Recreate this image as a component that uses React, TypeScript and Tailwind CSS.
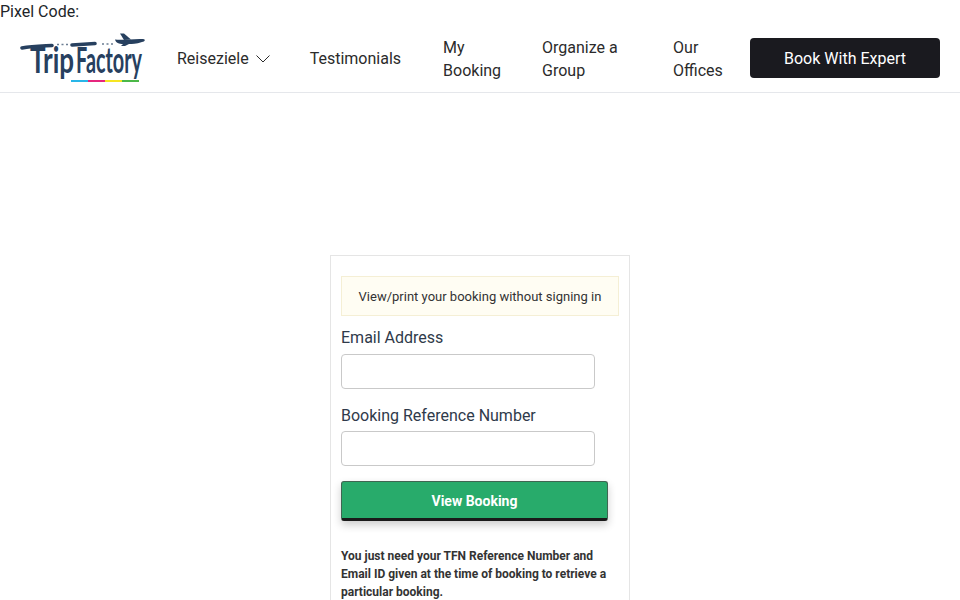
function Logo() {
  return (
    <svg width="126" height="52" viewBox="0 0 126 52" className="block shrink-0">
      {/* top strokes of the T and F */}
      <path d="M2 16 C 12 14 22 14 32 13.5" stroke="#27405f" strokeWidth="3.6" strokeLinecap="round" fill="none" />
      <path d="M52 13 L 75 11.5" stroke="#27405f" strokeWidth="3.6" strokeLinecap="round" fill="none" />
      <path d="M37 12.5h2M41.5 12.5h2M46 12.5h2M82 12h2M86.5 12h2M91 12h2" stroke="#6b7d92" strokeWidth="1.4" fill="none" />
      {/* plane */}
      <path d="M95 7.5 C 103 8.5 113 6.5 123 7 C 126 7.5 125 9.5 122 10 C 116 12 112 12 109 12 L 105 14 L 101 14 L 103 12 C 99 12 96 11 95 7.5 Z" fill="#27405f" />
      <path d="M104 8 L 100 1.5 L 104 1.5 L 111 7.5 Z" fill="#27405f" />
      <text
        transform="translate(10 41) scale(1 1.75)"
        textLength="44"
        lengthAdjust="spacingAndGlyphs"
        fontFamily="Lato, sans-serif"
        fontWeight="700"
        fontSize="21"
        fill="#27405f"
      >
        Trip
      </text>
      <text
        transform="translate(56 41) scale(1 1.75)"
        textLength="66"
        lengthAdjust="spacingAndGlyphs"
        fontFamily="Lato, sans-serif"
        fontWeight="700"
        fontSize="21"
        fill="#27405f"
      >
        Factory
      </text>
      {/* colour strip */}
      <rect x="51" y="48" width="17" height="2" fill="#29b6e8" />
      <rect x="68" y="48" width="17" height="2" fill="#e6267e" />
      <rect x="85" y="48" width="17" height="2" fill="#f6e522" />
      <rect x="102" y="48" width="17" height="2" fill="#4cb848" />
    </svg>
  );
}

function NavLink({ children, className = '' }: { children: React.ReactNode; className?: string }) {
  return <a className={`text-base leading-[23px] text-[#2b2b2b] ${className}`}>{children}</a>;
}

export default function App() {
  return (
    <div className="h-[600px] overflow-hidden bg-white font-['Roboto',sans-serif] text-[#212529]">
      <div className="h-[23px] text-base leading-[23px]">Pixel Code:</div>

      <header className="flex h-[70px] items-center border-b border-[#e5e7eb] pr-5 pl-5">
        <Logo />
        <nav className="mt-[2px] ml-[31px] flex flex-1 items-center">
          <NavLink className="flex items-center">
            Reiseziele
            <svg width="14" height="8" viewBox="0 0 14 8" className="ml-[7px]" fill="none" stroke="#2b2b2b" strokeWidth="1">
              <path d="M0.5 0.5 L7 7 L13.5 0.5" />
            </svg>
          </NavLink>
          <NavLink className="ml-[40px]">Testimonials</NavLink>
          <NavLink className="ml-[42px] w-[59px]">My Booking</NavLink>
          <NavLink className="ml-[40px] w-[91px]">Organize a Group</NavLink>
          <NavLink className="ml-[40px] w-[55px]">Our Offices</NavLink>
        </nav>
        <button className="h-10 w-[190px] rounded bg-[#1a1a1f] pt-[2px] text-base text-white">Book With Expert</button>
      </header>

      <main className="mt-[162px] flex justify-center">
        <div className="h-[400px] w-[300px] border border-[#e5e5e5] px-[10px] pt-5">
          <div className="flex h-10 items-center justify-center border border-[#f5efd5] bg-[#fffdf3] pt-[2px] text-[13px] text-[#333]">
            View/print your booking without signing in
          </div>
          <label className="mt-[10px] block text-base leading-[23px] text-[#2f3a4a]">Email Address</label>
          <input className="mt-[5px] block h-[35px] w-[254px] rounded border border-[#c9c9c9]" />
          <label className="mt-[15px] block text-base leading-[23px] text-[#2f3a4a]">Booking Reference Number</label>
          <input className="mt-1 block h-[35px] w-[254px] rounded border border-[#c9c9c9]" />
          <button className="mt-[15px] block h-10 w-[267px] rounded-[3px] border border-b-[3px] border-[#3f6652] border-b-[#1a1a1a] bg-[#28ab6b] pt-[2px] text-sm font-bold text-white shadow-[0_4px_8px_rgba(0,0,0,0.2)]">
            View Booking
          </button>
          <p className="mt-[26px] w-[270px] text-xs leading-[18px] font-bold text-[#333]">
            You just need your TFN Reference Number and Email ID given at the time of booking to retrieve a particular booking.
          </p>
        </div>
      </main>
    </div>
  );
}
